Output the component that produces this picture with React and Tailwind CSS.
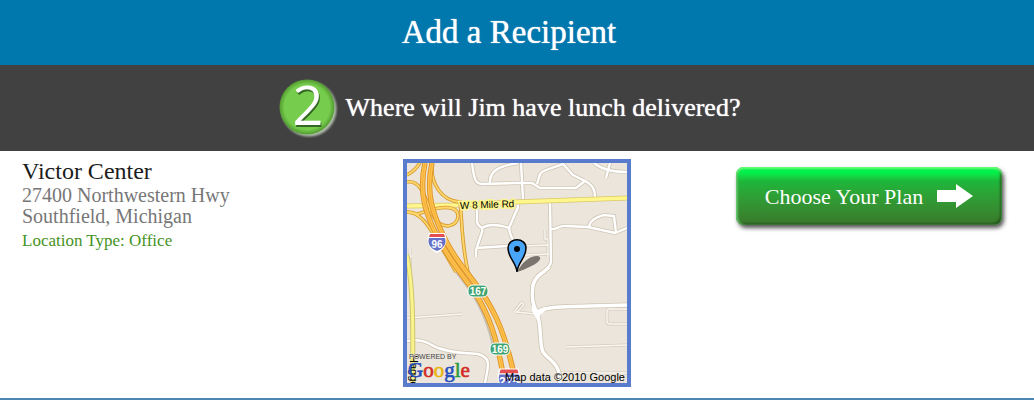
import React from "react";

const minorRoads = [
  "M472 163 C474 178 475 184 482 184 L516 183 L532 183 L540 188 L576 188 L586 180",
  "M490 183 C489 171 499 166 518 163",
  "M521 163 L523 199",
  "M537 184 C540 176 538 173 546 170 L563 164 L573 175 L585 181 C593 185 595 190 595 198",
  "M594 163 C600 168 608 172 627 172",
  "M610 163 L606 178",
  "M477 210 L477 222 C478 228 484 226 482 232 L476 250 L476 257",
  "M482 228 C490 223 500 225 509 228 L518 207 L517 202",
  "M509 228 C510 236 513 240 518 247",
  "M476 248 L507 246",
  "M550 202 L551 262 C549 272 536 274 533 285 C531 302 534 306 537 313",
  "M551 229 C558 230 558 225 566 226 L588 227 L615 233 L627 228",
  "M589 227 C590 219 598 217 604 215 L614 216 L616 233",
  "M407 341 C425 338 430 345 438 348 C456 354 460 352 478 354 C492 358 488 366 485 383",
];

const faintRoads = [
  "M545 230 L545 239 L550 239",
  "M529 288 L533 288",
  "M407 318 L462 314",
  "M566 347 L627 345",
  "M612 305 L612 309 M627 309 H609 Q607 309 607 312 V321 Q607 324 610 324 H627",
  "M516 312 L536 314",
  "M514 312 L521 303 Q524 302 523 306 L516 313",
  "M622 383 L622 373 L627 373 M560 373 H622",
  "M523 246 L549 245 M525 255 L549 254 M548 240 V257",
  "M410 248 V269 M407 256 H412",
];

const arterial =
  "M549 267 C544 273 536 274 533 285 C531 302 534 306 537 313 C542 326 539 343 543 352 C550 362 560 362 560 383 M537 312 C548 305 575 307 627 305";

const ramps = [
  "M407 175 C416 170 420 164 422 158",
  "M432 163 C430 184 442 201 460 202 C462 215 461 241 468 272 C473 281 480 286 484 298",
  "M407 182 C422 179 426 202 433 216 C443 232 458 226 458 216 C458 204 438 206 418 214 L407 212",
  "M407 212 C423 212 432 232 443 250 L456 272",
];

const highways = [
  "M425 163 C418 195 427 216 437 236 C447 256 459 271 474 291 C489 315 496 335 503 374",
  "M432 163 C425 194 434 216 443 235 C452 255 466 271 481 291 C497 315 505 335 514 374",
];

function Interstate({ x, y, label, scale }) {
  return (
    <g transform={`translate(${x} ${y}) scale(${scale})`}>
      <path d="M-8 -8 H8 C12 1 7 9 0 12 C-7 9 -12 1 -8 -8Z" fill="#fff" />
      <path d="M-7 -3 H8 C10 3 6 8 0 10 C-6 8 -10 3 -8 -3Z" fill="#6570c8" />
      <path d="M-7 -7 H7 L8 -4 H-8Z" fill="#e34f50" />
      <text y="7" textAnchor="middle" fontSize="10" fontWeight="700" fill="#fff">{label}</text>
    </g>
  );
}

function ExitBadge({ x, y, label }) {
  return (
    <g>
      <rect x={x - 10} y={y - 6} width="20" height="12" rx="5" fill="#3fa471" stroke="#fff" />
      <text x={x} y={y + 4} textAnchor="middle" fontSize="10" fontWeight="700" fill="#fff">{label}</text>
    </g>
  );
}

function LocationMap() {
  return (
    <svg
      viewBox="407 163 220 220"
      role="img"
      aria-label="Map of Victor Center"
      className="block size-[228px] border-4 border-[#587bcd] bg-[#ebe5dc] font-['Liberation_Sans',sans-serif]"
      fill="none"
    >
      <g stroke="#d5ccbc" strokeWidth="3">
        {faintRoads.map((d) => <path key={d} d={d} />)}
      </g>
      <g stroke="#faf8f4" strokeWidth="1.4">
        {faintRoads.map((d) => <path key={d} d={d} />)}
      </g>
      <g stroke="#cfc5b3" strokeWidth="4">
        {minorRoads.map((d) => <path key={d} d={d} />)}
      </g>
      <path d={arterial} stroke="#cfc5b3" strokeWidth="5" />
      <g stroke="#fff" strokeWidth="2.4">
        {minorRoads.map((d) => <path key={d} d={d} />)}
      </g>
      <path d={arterial} stroke="#fff" strokeWidth="3.4" />
      <path d="M532 300 L537 310 L550 307 L540 315 L538 322 L532 311Z" fill="#fff" />

      <path d="M456 272 C474 294 485 312 493 346" stroke="#c9bfae" strokeWidth="2" />
      <path d="M407 255 C415 298 412 345 413 383" stroke="#cfc46f" strokeWidth="5" />
      <path d="M407 255 C415 298 412 345 413 383" stroke="#f9f38b" strokeWidth="3" />
      <path d="M407 206 L460 205 L516 202 L627 198" stroke="#d9c968" strokeWidth="5" />
      <path d="M407 206 L460 205 L516 202 L627 198" stroke="#fff68c" strokeWidth="3.6" />
      <g stroke="#d79b32" strokeWidth="3.6">
        {ramps.map((d) => <path key={d} d={d} />)}
      </g>
      <g stroke="#ffd76a" strokeWidth="1.8">
        {ramps.map((d) => <path key={d} d={d} />)}
      </g>
      <g stroke="#dc9126" strokeWidth="5.4">
        {highways.map((d) => <path key={d} d={d} />)}
      </g>
      <g stroke="#ffc34d" strokeWidth="3.6">
        {highways.map((d) => <path key={d} d={d} />)}
      </g>
      <g stroke="#f0ab38" strokeWidth=".8">
        {highways.map((d) => <path key={d} d={d} />)}
      </g>

      <text x="460" y="209" fontSize="10" fill="#000" stroke="#fff68c" strokeWidth="3" paintOrder="stroke" transform="rotate(-2 460 209)">W 8 Mile Rd</text>
      <Interstate x={437} y={241} label="96" scale={1} />
      <ExitBadge x={478} y={291} label="167" />
      <ExitBadge x={500} y={349} label="169" />
      <Interstate x={509} y={378} label="275" scale={1.2} />

      <path d="M517 272 C522 263 528 256 538 256 C544 258 538 265 517 272Z" fill="#49453f" opacity=".7" />
      <path d="M517 272 C516 262 508 258 508 248 C508 237 526 237 526 248 C526 258 518 262 517 272Z" fill="#48a5f7" stroke="#000" strokeWidth="1.5" />
      <circle cx="517" cy="249" r="3" fill="#000" />

      <text x="410" y="355" fontSize="11" fill="#000" transform="rotate(90 410 355)">Haggerty</text>
      <text x="409" y="359" fontSize="7" fill="#444" stroke="#ebe5dc" strokeWidth="1" paintOrder="stroke">POWERED BY</text>
      <text x="408" y="377" fontSize="21" className="font-['Liberation_Serif',serif]" strokeWidth=".6">
        <tspan fill="#244fbd" stroke="#244fbd">G</tspan>
        <tspan fill="#d32b25" stroke="#d32b25">o</tspan>
        <tspan fill="#e8b60e" stroke="#e8b60e">o</tspan>
        <tspan fill="#244fbd" stroke="#244fbd">g</tspan>
        <tspan fill="#269b3d" stroke="#269b3d">l</tspan>
        <tspan fill="#d32b25" stroke="#d32b25">e</tspan>
      </text>
      <text x="625" y="381" textAnchor="end" fontSize="11" fill="#000">Map data ©2010 Google</text>
    </svg>
  );
}

function StepBadge() {
  return (
    <svg viewBox="0 0 60 60" className="size-[60px] shrink-0" role="img" aria-label="Step 2">
      <defs>
        <radialGradient id="step-fill">
          <stop offset=".82" stopColor="#76cc4c" />
          <stop offset="1" stopColor="#529a31" />
        </radialGradient>
        <filter id="step-glow" x="-20%" y="-20%" width="140%" height="140%">
          <feGaussianBlur stdDeviation="1.3" />
        </filter>
      </defs>
      <circle cx="31" cy="31" r="27.5" fill="#d6e8ce" opacity=".75" filter="url(#step-glow)" />
      <circle cx="29" cy="29" r="27.5" fill="url(#step-fill)" />
      <g fontSize="54" textAnchor="middle" className="font-['Open_Sans',sans-serif]">
        <text x="31" y="49" fill="#356824">2</text>
        <text x="30" y="47" fill="#fff">2</text>
      </g>
    </svg>
  );
}

export default function App() {
  return (
    <main className="border-b-2 border-[#4b86ae] bg-white font-['Liberation_Serif',serif]">
      <header className="bg-[#0077ad] pt-3 pr-4 pb-[13px] text-center text-white">
        <h1 className="text-[33px] leading-10 font-normal text-shadow-[0_0_1px_#fff]">Add a Recipient</h1>
      </header>
      <section className="flex items-center justify-center gap-2 bg-[#414141] py-[13px] pr-4 text-white">
        <StepBadge />
        <h2 className="text-[26px] leading-8 font-normal text-shadow-[0_0_1px_#fff]">Where will Jim have lunch delivered?</h2>
      </section>
      <section className="grid grid-cols-[1fr_auto_1fr] items-start pt-2 pb-[11px]">
        <div className="pl-[22px]">
          <h3 className="pb-0.5 text-2xl leading-6 font-normal text-[#1c1c1c]">Victor Center</h3>
          <address className="text-xl leading-[21px] text-[#777] not-italic">
            27400 Northwestern Hwy<br />Southfield, Michigan
          </address>
          <p className="mt-0.5 text-[17px] leading-6 text-[#459324]">Location Type: Office</p>
        </div>
        <LocationMap />
        <div className="flex justify-end pt-2 pr-8">
          <button
            type="button"
            className="flex h-[58px] w-[266px] items-center justify-center gap-3.5 rounded-lg bg-linear-to-b from-[#00f04a] from-10% via-[#1db53a] via-25% to-[#39782b] text-[22px] text-white shadow-[2px_3px_4px_#555,inset_0_2px_2px_#69ff78,inset_2px_0_2px_#64b866,inset_-2px_-2px_2px_#28591f]"
          >
            Choose Your Plan
            <svg viewBox="0 0 36 24" className="h-6 w-9" fill="#fff" aria-hidden="true">
              <path d="M0 6 H19 V0 L36 12 L19 24 V18 H0Z" />
            </svg>
          </button>
        </div>
      </section>
    </main>
  );
}
